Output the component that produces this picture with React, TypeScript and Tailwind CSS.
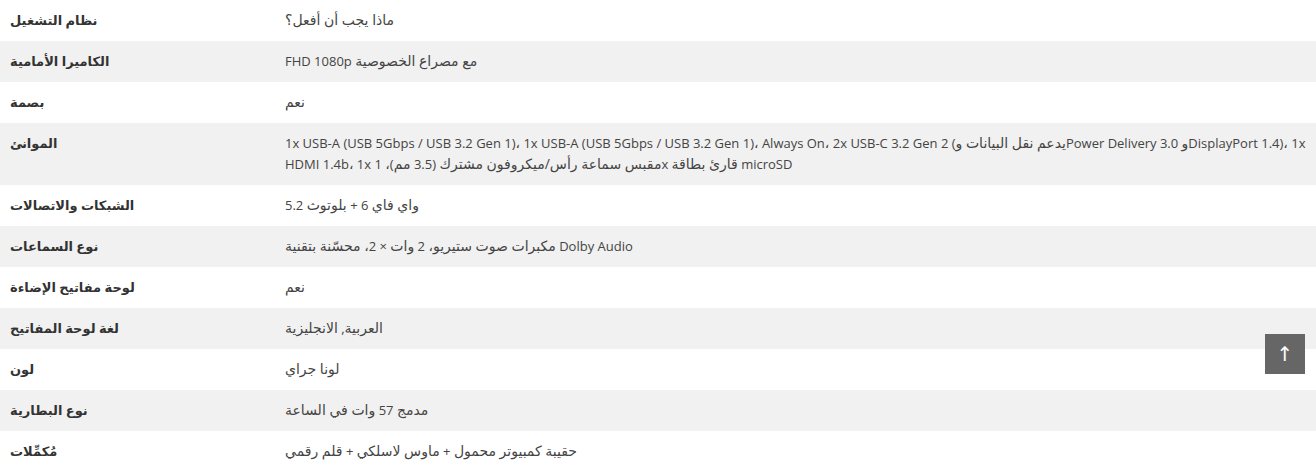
import React from 'react';

const specs: [string, string][] = [
  ['نظام التشغيل', 'ماذا يجب أن أفعل؟'],
  ['الكاميرا الأمامية', 'FHD 1080p مع مصراع الخصوصية'],
  ['بصمة', 'نعم'],
  [
    'الموانئ',
    '1x USB-A (USB 5Gbps / USB 3.2 Gen 1)، 1x USB-A (USB 5Gbps / USB 3.2 Gen 1)، Always On، 2x USB-C 3.2 Gen 2 (يدعم نقل البيانات وPower Delivery 3.0 وDisplayPort 1.4)، 1x HDMI 1.4b، 1x مقبس سماعة رأس/ميكروفون مشترك (3.5 مم)، 1x قارئ بطاقة microSD',
  ],
  ['الشبكات والاتصالات', 'واي فاي 6 + بلوتوث 5.2'],
  ['نوع السماعات', 'مكبرات صوت ستيريو، 2 وات × 2، محسّنة بتقنية Dolby Audio'],
  ['لوحة مفاتيح الإضاءة', 'نعم'],
  ['لغة لوحة المفاتيح', 'العربية, الانجليزية'],
  ['لون', 'لونا جراي'],
  ['نوع البطارية', 'مدمج 57 وات في الساعة'],
  ['مُكمِّلات', 'حقيبة كمبيوتر محمول + ماوس لاسلكي + قلم رقمي'],
];

// arabic words come out narrower in DejaVu than in the site's kufi font,
// so bump just the arabic runs a little
const arabicRun = /([\u0600-\u06FF][\u0600-\u06FF\s/]*[\u0600-\u06FF]|[\u0600-\u06FF])/g;

function SpecValue({ text }: { text: string }) {
  const parts = text.split(arabicRun);
  return (
    <>
      {parts.map((p, i) =>
        i % 2 === 1 ? (
          <span key={i} className="text-[14px] leading-[14px]">
            {p}
          </span>
        ) : (
          <React.Fragment key={i}>{p}</React.Fragment>
        )
      )}
    </>
  );
}

export default function App() {
  return (
    <div
      className="w-[1316px] h-[470px] overflow-hidden bg-white text-[13px] leading-[21px] text-[#333]"
      style={{ fontFamily: '"Open Sans", "DejaVu Sans", sans-serif' }}
    >
      <table className="w-full border-collapse">
        <tbody>
          {specs.map(([label, value], i) => (
            <tr key={i} className={i % 2 === 1 ? 'bg-[#f1f1f1]' : 'bg-white'}>
              <th className="w-[275px] px-[10px] py-[10px] text-left align-top font-bold text-[#333]">
                {label}
              </th>
              <td className="px-[10px] py-[10px] text-left align-top font-normal text-[#444]">
                <SpecValue text={value} />
              </td>
            </tr>
          ))}
        </tbody>
      </table>

      <button
        className="fixed right-[11px] top-[334px] w-[40px] h-[40px] bg-[#666] text-white flex items-center justify-center text-[20px] leading-none"
        aria-label="Back to top"
      >
        ↑
      </button>
    </div>
  );
}
